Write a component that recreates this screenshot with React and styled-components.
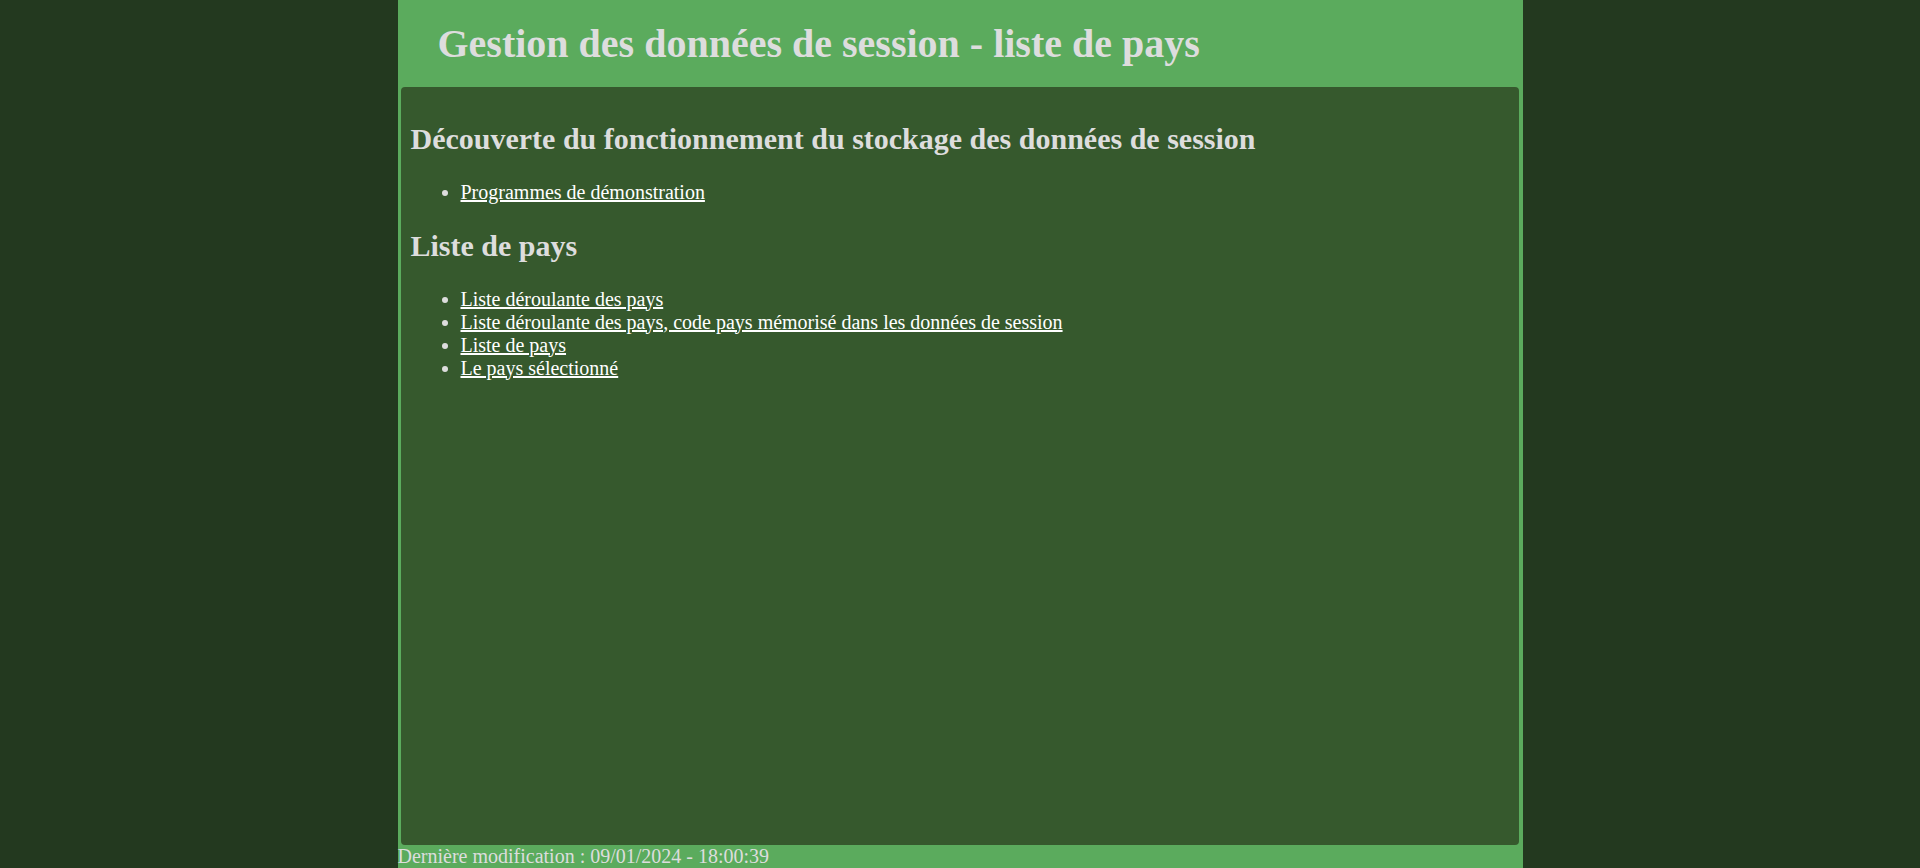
import React from "react";
import styled, { createGlobalStyle } from "styled-components";

const GlobalStyle = createGlobalStyle`
  html, body {
    margin: 0;
    padding: 0;
  }
  body {
    background: #23391f;
    color: #dddddd;
    font-family: "Liberation Serif", "Times New Roman", serif;
    font-size: 20px;
  }
`;

const Page = styled.div`
  display: flex;
  flex-direction: column;
  width: 1125px;
  min-height: 100vh;
  margin: 0 auto;
  background: #5bab5d;
`;

const Header = styled.header`
  h1 {
    margin: 0.5em 1em;
    font-size: 2em;
    font-weight: 700;
    color: #dddddd;
  }
`;

const Main = styled.main`
  flex: 1;
  margin: 0 4px 0 3px;
  padding: 10px;
  border-radius: 4px;
  background: #36592d;
  display: flow-root;

  h2 {
    margin: 0.83em 0;
    font-size: 1.5em;
    font-weight: 700;
    color: #dddddd;
  }
`;

const LinkList = styled.ul`
  margin: 1em 0;
  padding-left: 50px;
  list-style: disc;
`;

const Item = styled.li`
  color: #dddddd;

  a {
    color: #ffffff;
    text-decoration: underline;
  }
`;

const Footer = styled.footer`
  color: #dddddd;
  line-height: normal;
`;

const sections = [
  {
    title: "Découverte du fonctionnement du stockage des données de session",
    links: ["Programmes de démonstration"],
  },
  {
    title: "Liste de pays",
    links: [
      "Liste déroulante des pays",
      "Liste déroulante des pays, code pays mémorisé dans les données de session",
      "Liste de pays",
      "Le pays sélectionné",
    ],
  },
];

const App = () => {
  return (
    <>
      <GlobalStyle />
      <Page>
        <Header>
          <h1>Gestion des données de session - liste de pays</h1>
        </Header>
        <Main>
          {sections.map((section) => (
            <section key={section.title}>
              <h2>{section.title}</h2>
              <LinkList>
                {section.links.map((label) => (
                  <Item key={label}>
                    <a href="#" onClick={(e) => e.preventDefault()}>
                      {label}
                    </a>
                  </Item>
                ))}
              </LinkList>
            </section>
          ))}
        </Main>
        <Footer>Dernière modification : 09/01/2024 - 18:00:39</Footer>
      </Page>
    </>
  );
};

export default App;
